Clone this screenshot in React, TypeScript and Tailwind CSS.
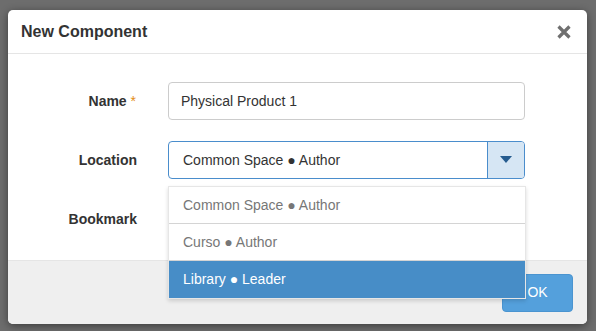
import React from "react";

export default function App() {
  const font = { fontFamily: '"Liberation Sans", Arial, sans-serif' };
  return (
    <div className="w-[596px] h-[331px] bg-[#6d6d6d] overflow-hidden pt-[10px] pl-[8px]" style={font}>
      <div className="relative w-[579px] h-[314px] bg-white rounded-[5px] shadow-[0_2px_8px_rgba(0,0,0,0.45)] flex flex-col overflow-visible">
        {/* Header */}
        <div className="h-[44px] border-b border-[#e5e5e5] flex items-center justify-between pl-[13px] pr-[16px] shrink-0">
          <span className="text-[16px] font-bold text-[#333]">New Component</span>
          <svg width="14" height="14" viewBox="0 0 14 14" className="mt-[1px]">
            <path d="M1.5 1.5 L12.5 12.5 M12.5 1.5 L1.5 12.5" stroke="#6f6f6f" strokeWidth="3.2" strokeLinecap="butt" />
          </svg>
        </div>
        {/* Body */}
        <div className="flex-1 flex flex-col pt-[28px] gap-[21px]">
          <div className="flex items-center h-[38px]">
            <div className="w-[129px] text-right text-[14px] font-bold text-[#333] pr-[1px]">
              Name <span className="text-[#e38d13] font-normal">*</span>
            </div>
            <div className="ml-[31px] w-[357px] h-[38px] border border-[#ccc] rounded-[4px] flex items-center pl-[12px] text-[14px] text-[#333]">
              Physical Product 1
            </div>
          </div>
          <div className="relative flex items-center h-[38px]">
            <div className="w-[129px] text-right text-[14px] font-bold text-[#333]">Location</div>
            <div className="ml-[31px] w-[357px] h-[38px] border border-[#4a8dcc] rounded-[4px] flex items-stretch text-[14px] text-[#333] overflow-hidden">
              <div className="flex-1 flex items-center pl-[14px]">Common Space ● Author</div>
              <div className="w-[37px] bg-[#d6e6f4] border-l border-[#4a8dcc] flex items-center justify-center">
                <svg width="12" height="8" viewBox="0 0 12 8">
                  <path d="M0 0 H12 L6 7 Z" fill="#265c8f" />
                </svg>
              </div>
            </div>
            <div className="absolute left-[160px] top-[45px] w-[358px] bg-white border border-[#e6e6e6] shadow-[0_2px_4px_rgba(0,0,0,0.15)] z-10 text-[14px]">
              <div className="h-[37px] flex items-center pl-[14px] text-[#777] border-b border-[#d4d4d4]">Common Space ● Author</div>
              <div className="h-[37px] flex items-center pl-[14px] text-[#777] border-b border-[#d4d4d4]">Curso ● Author</div>
              <div className="h-[37px] flex items-center pl-[14px] text-white bg-[#478dc7]">Library ● Leader</div>
            </div>
          </div>
          <div className="flex items-center h-[38px]">
            <div className="w-[129px] text-right text-[14px] font-bold text-[#333]">Bookmark</div>
          </div>
        </div>
        {/* Footer */}
        <div className="h-[64px] bg-[#efefef] border-t border-[#e5e5e5] rounded-b-[5px] flex items-center justify-end pr-[14px] shrink-0">
          <div className="w-[71px] h-[38px] bg-[#54a0dc] border border-[#4a94d0] rounded-[4px] flex items-center justify-center text-white text-[14px]">
            OK
          </div>
        </div>
      </div>
    </div>
  );
}
